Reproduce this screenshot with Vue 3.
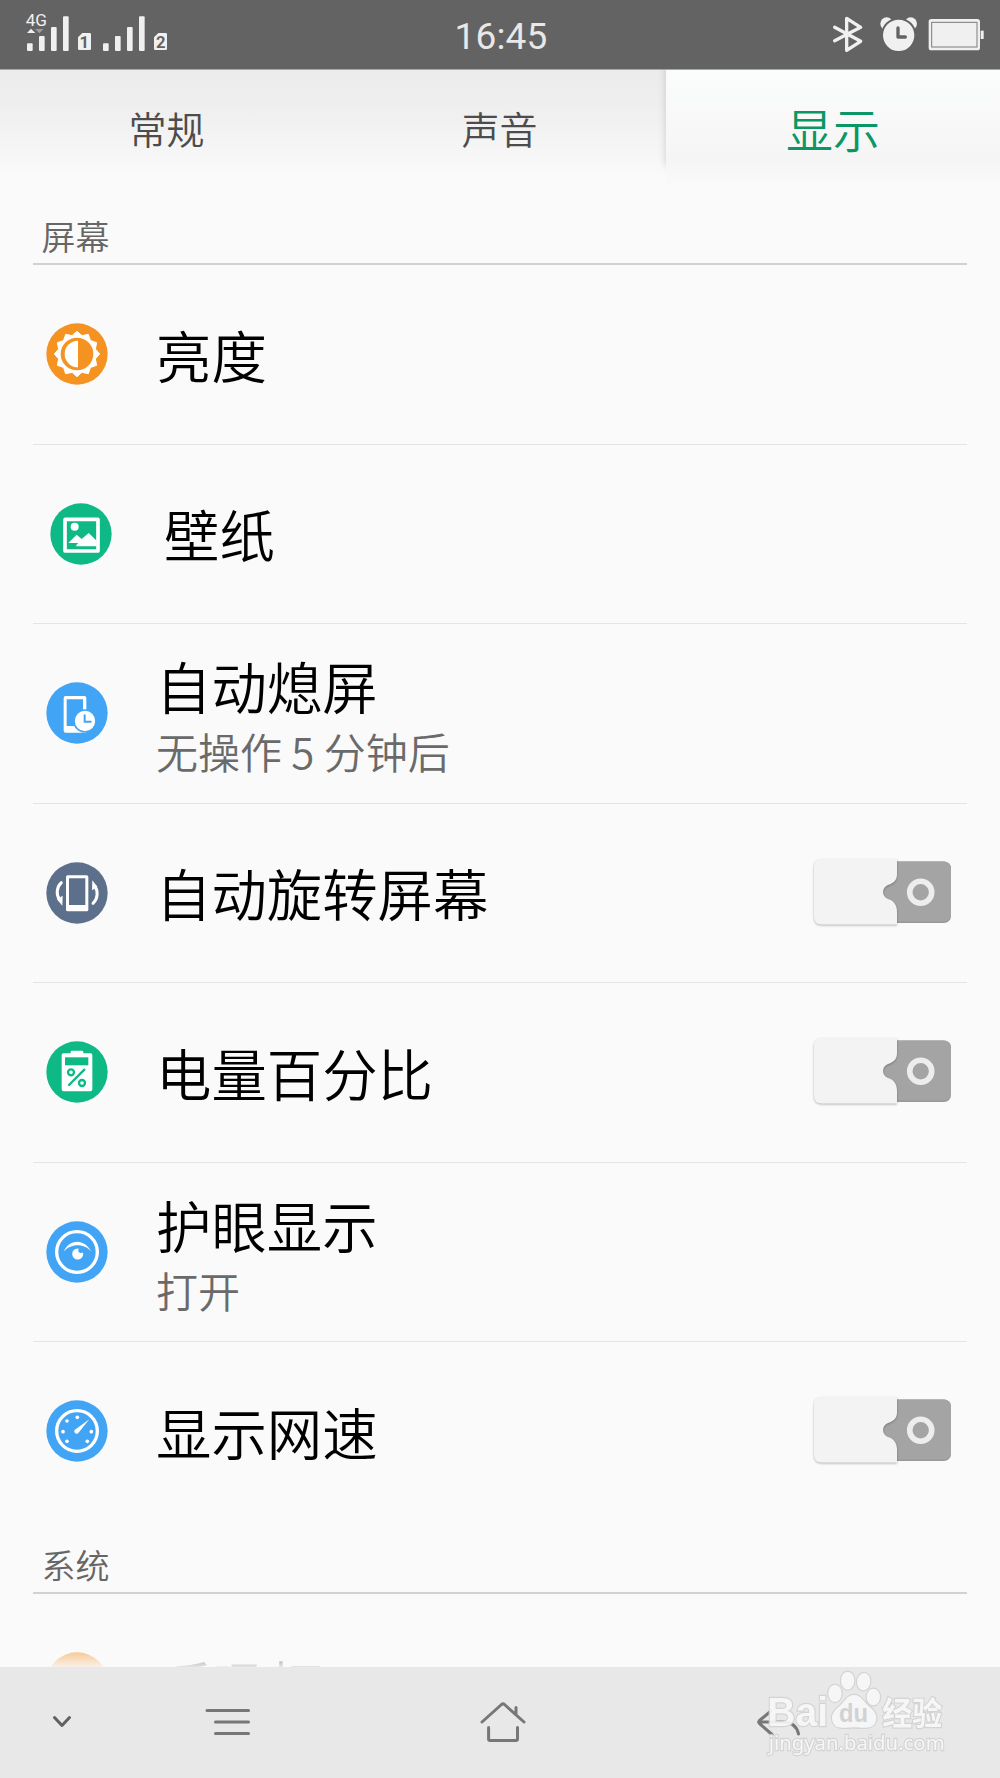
<template>
  <div class="screen">
    <header class="status-bar">
      <svg class="status-icons" viewBox="0 0 600 207">
        <g fill="#f0f0f0">
          <text x="77" y="78" class="network" textLength="64" lengthAdjust="spacingAndGlyphs">4G</text>
          <path d="M81 99 L93 86 L106 99Z" />
          <path d="M105 87 H131 L118 100Z" opacity="0.4" />
          <rect v-for="bar in signalBars" :key="bar.x" :x="bar.x" :y="bar.y" width="17" :height="153 - bar.y" rx="3" />
          <path d="M247 99 H269 Q273 99 273 103 V146 Q273 150 269 150 H238 Q234 150 234 146 V112Z" />
          <path d="M475 99 H497 Q501 99 501 103 V146 Q501 150 497 150 H466 Q462 150 462 146 V112Z" />
        </g>
        <text x="253" y="144" class="sim">1</text>
        <text x="482" y="144" class="sim">2</text>
      </svg>
      <span class="time">16:45</span>
      <svg class="status-icons" viewBox="0 0 600 207">
        <path d="M104 82 L182 124 L140 151 V55 L182 82 L104 122" fill="none" stroke="#f0f0f0" stroke-width="10" stroke-linecap="round" stroke-linejoin="round" />
        <g fill="#f0f0f0">
          <circle cx="260" cy="71" r="19" />
          <circle cx="332" cy="71" r="19" />
        </g>
        <circle cx="296" cy="106" r="50" fill="#f0f0f0" stroke="#636363" stroke-width="6" />
        <path d="M294 84 V111 H316" fill="none" stroke="#636363" stroke-width="10" stroke-linecap="round" stroke-linejoin="round" />
        <rect x="386" y="57" width="154" height="94" rx="8" fill="#f0f0f0" />
        <rect x="395" y="67" width="136" height="74" fill="#f0f0f0" stroke="#7c7c7c" stroke-width="3" />
        <rect x="542" y="92" width="9" height="25" fill="#f0f0f0" />
      </svg>
    </header>

    <nav class="tabs">
      <div v-for="tab in tabs" :key="tab" :class="['tab', { active: tab === activeTab }]" @click="activeTab = tab">
        {{ tab }}
      </div>
    </nav>

    <main class="content">
      <h2 class="section-title">屏幕</h2>
      <div v-for="item in items" :key="item.label" :class="['row', { inset: item.inset }]">
        <svg class="icon" viewBox="-93 -93 186 186">
          <circle r="92" :fill="item.color" />
          <g v-if="item.icon === 'brightness'">
            <polygon :points="sunPoints" fill="#fff" stroke="#fff" stroke-width="3" stroke-linejoin="round" />
            <circle r="49" :fill="item.color" />
            <path d="M3 -40 A40 40 0 0 0 3 40Z" fill="#fff" />
          </g>
          <g v-else-if="item.icon === 'wallpaper'" fill="#fff">
            <rect x="-48" y="-44" width="99" height="95" rx="1" fill="none" stroke="#fff" stroke-width="11" />
            <circle cx="-19" cy="-22" r="12" />
            <path d="M-38 27 L-13 2 L2 15 L23 -3 L47 20 V37 H-14 V33 L-8 27Z" />
          </g>
          <g v-else-if="item.icon === 'timeout'">
            <path fill="#fff" fill-rule="evenodd" d="M-34 -51 H22 Q28 -51 28 -45 V59 H-34 Q-40 59 -40 53 V-45 Q-40 -51 -34 -51Z M-31 -41 V39 H18 V-41Z" />
            <circle cx="24" cy="24" r="33" fill="#fff" :stroke="item.color" stroke-width="5" />
            <path d="M23 7 V26 H41" fill="none" :stroke="item.color" stroke-width="6" stroke-linecap="round" />
          </g>
          <g v-else-if="item.icon === 'rotate'" fill="#fff">
            <path fill-rule="evenodd" d="M-28 -53 H29 Q34 -53 34 -48 V50 Q34 55 29 55 H-28 Q-33 55 -33 50 V-48 Q-33 -53 -28 -53Z M-24 -44 V36 H25 V-44Z" />
            <path d="M-47 -31 C-62 -17 -63 6 -52 21" fill="none" stroke="#fff" stroke-width="9" stroke-linecap="round" />
            <path d="M-60 19 L-43 8 L-44 38Z" />
            <path d="M48 31 C63 17 64 -6 53 -21" fill="none" stroke="#fff" stroke-width="9" stroke-linecap="round" />
            <path d="M61 -19 L45 -8 L46 -38Z" />
          </g>
          <g v-else-if="item.icon === 'battery'">
            <path d="M-19 -60 Q-19 -64 -15 -64 H15 Q19 -64 19 -60 V-56 H41 Q46 -56 46 -51 V52 Q46 58 40 58 H-40 Q-46 58 -46 52 V-51 Q-46 -56 -41 -56 H-19Z" fill="#fff" />
            <rect x="-36" y="-44" width="70" height="24" :fill="item.color" />
            <g fill="none" :stroke="item.color" stroke-width="7">
              <circle cx="-18" cy="1" r="9" />
              <circle cx="15" cy="33" r="9" />
              <path d="M22 -7 L-24 39" stroke-linecap="round" />
            </g>
          </g>
          <g v-else-if="item.icon === 'eye'">
            <circle r="61" fill="none" stroke="#fff" stroke-width="10" />
            <path d="M-40 -1 C-24 -41 24 -41 43 -1 C24 -27 -20 -27 -40 -1Z" fill="#fff" />
            <circle cx="2" cy="6" r="16.5" fill="#fff" />
            <circle cx="12" cy="-5" r="8" :fill="item.color" />
          </g>
          <g v-else>
            <circle r="61" fill="none" stroke="#fff" stroke-width="10" />
            <circle v-for="dot in dialDots" :key="dot.join()" :cx="dot[0]" :cy="dot[1]" r="5.5" fill="#fff" />
            <path d="M37 -35 L4 6 C-1 12 -12 5 -7 -3Z" fill="#fff" />
          </g>
        </svg>
        <div :class="['text', { double: item.value }]">
          <div class="label">{{ item.label }}</div>
          <div v-if="item.value" class="value">{{ item.value }}</div>
        </div>
        <svg v-if="item.toggle" class="toggle" viewBox="0 0 146 76">
          <rect x="70" y="6.5" width="71" height="61.5" rx="7" fill="#999" />
          <rect x="70" y="6.5" width="71" height="60" rx="7" fill="#a4a4a4" />
          <path class="knob" d="M12 4 H87 V19 C87 25 84 27.500 79.500 29.500 C71 31.500 71 42.500 79.500 44.500 C84 46.500 87 50 87 57 V69.500 H12 Q4 69.500 4 61.500 V12 Q4 4 12 4Z" />
          <circle cx="110.700" cy="37.300" r="11" fill="none" stroke="#ededed" stroke-width="5.600" />
        </svg>
      </div>

      <h2 class="section-title system">系统</h2>
      <div class="row fading">
        <svg class="icon" viewBox="-93 -93 186 186">
          <circle r="92" fill="#f59322" />
        </svg>
        <div class="text">
          <div class="label">呼吸灯</div>
        </div>
      </div>
    </main>

    <footer class="nav-bar">
      <svg class="nav-icon chevron" viewBox="0 0 20 14">
        <path d="M2.500 2.500 L10 10.500 L17.500 2.500" />
      </svg>
      <svg class="nav-icon menu" viewBox="0 0 46 28">
        <path d="M2 2.500 H43.500 M10.500 14 H43.500 M10.500 25.500 H43.500" />
      </svg>
      <svg class="nav-icon home" viewBox="0 0 48 44">
        <path d="M3 22 L22.500 4.500 Q24 3.300 25.500 4.500 L45 22 M37 7.500 V14.500 M9.600 27.500 V39 Q9.600 40.500 11 40.500 H37 Q38.500 40.500 38.500 39 V27.500" />
      </svg>
      <svg class="nav-icon back" viewBox="0 0 46 30">
        <path d="M15 3 L3.500 12.500 Q2 14 3.500 15.500 L16 26.500 M3 14 H27 C36 14 41 19 42.500 26" />
      </svg>
      <svg class="watermark" viewBox="90 75 576 285">
        <g class="mark">
          <text x="112" y="258" class="bai" textLength="182" lengthAdjust="spacingAndGlyphs">Bai</text>
          <ellipse cx="315" cy="160" rx="20" ry="26" />
          <ellipse cx="353" cy="122" rx="20" ry="27" />
          <ellipse cx="401" cy="125" rx="20" ry="26" transform="rotate(8 401 125)" />
          <ellipse cx="430" cy="171" rx="20" ry="25" />
          <path d="M372 165 C392 165 401 184 415 197 C434 213 444 226 437 245 C429 267 407 264 372 262 C337 264 316 267 308 245 C301 226 311 213 330 197 C344 184 352 165 372 165Z" />
          <text x="457" y="254" class="jingyan" textLength="180" lengthAdjust="spacingAndGlyphs">经验</text>
          <text x="116" y="329" class="url" textLength="528" lengthAdjust="spacingAndGlyphs">jingyan.baidu.com</text>
        </g>
        <text x="327" y="247" class="du" textLength="87" lengthAdjust="spacingAndGlyphs">du</text>
      </svg>
    </footer>
  </div>
</template>

<script setup>
import { ref } from "vue";

const tabs = ["常规", "声音", "显示"];
const activeTab = ref("显示");

const items = [
  { label: "亮度", icon: "brightness", color: "#f59322" },
  { label: "壁纸", icon: "wallpaper", color: "#0fb985", inset: true },
  { label: "自动熄屏", value: "无操作 5 分钟后", icon: "timeout", color: "#42a4f4" },
  { label: "自动旋转屏幕", icon: "rotate", color: "#5c708c", toggle: true },
  { label: "电量百分比", icon: "battery", color: "#0fb985", toggle: true },
  { label: "护眼显示", value: "打开", icon: "eye", color: "#42a4f4" },
  { label: "显示网速", icon: "speed", color: "#42a4f4", toggle: true },
];

const signalBars = [
  { x: 81, y: 130 },
  { x: 117, y: 108 },
  { x: 153, y: 81 },
  { x: 189, y: 49 },
  { x: 309, y: 130 },
  { x: 345, y: 108 },
  { x: 381, y: 81 },
  { x: 417, y: 49 },
];

const dialDots = [[1, -41], [-30, -30], [-42, 2], [-30, 31], [31, 31], [43, 2]];

// 12 tips alternating with the valleys between them
const sunPoints = Array.from({ length: 24 }, (_, i) => {
  const radius = i % 2 ? 57 : 68;
  const angle = (i * Math.PI) / 12;
  return `${(radius * Math.sin(angle)).toFixed(1)},${(-radius * Math.cos(angle)).toFixed(1)}`;
}).join(" ");
</script>

<style>
body {
  background: #fafafa;
}
</style>

<style scoped>
.screen {
  display: flex;
  flex-direction: column;
  width: 1000px;
  height: 1778px;
  overflow: hidden;
  background: #fafafa;
  font-family: "Noto Sans CJK SC", sans-serif;
  font-weight: 350;
}

.status-bar {
  display: flex;
  justify-content: space-between;
  flex: none;
  height: 69px;
  border-bottom: 1px solid #a8a8a8;
  background: #636363;
}

.status-icons {
  width: 200px;
  height: 69px;
}

.network {
  font: 400 49px Roboto, sans-serif;
}

.sim {
  font: bold 50px Roboto, sans-serif;
  fill: #636363;
  text-anchor: middle;
}

.time {
  padding-left: 2px;
  color: #e8e8e8;
  font: 37px/74px Roboto, sans-serif;
  letter-spacing: 0.2px;
}

.tabs {
  display: grid;
  grid-template-columns: 333px 333px 334px;
  flex: none;
  height: 118px;
  background: linear-gradient(#ebebeb, #f1f1f1 45%, #fafafa 90%);
  overflow: hidden;
}

.tab {
  color: #4c4c4c;
  font-size: 38px;
  line-height: 116px;
  text-align: center;
}

.tab.active {
  background: linear-gradient(#fafdfc, #f8f9f8 35%, #f5f5f5 75%, #fafafa);
  box-shadow: 0 -22px 8px rgba(0, 0, 0, 0.16);
  color: #0a9765;
  font-size: 47px;
  line-height: 115px;
}

.content {
  flex: none;
  box-sizing: border-box;
  height: 1479px;
  padding: 15px 33px 0;
  overflow: hidden;
}

.section-title {
  box-sizing: border-box;
  height: 62px;
  margin: 0;
  padding-left: 8.5px;
  border-bottom: 2px solid #d2d2d2;
  color: #666;
  font-size: 34px;
  font-weight: 350;
  line-height: 66px;
}

.section-title.system {
  margin-top: 10px;
}

.row {
  display: flex;
  align-items: center;
  box-sizing: border-box;
  height: 179.5px;
  padding: 0 11px 0 13px;
  border-bottom: 1px solid #e4e4e4;
}

.row:nth-of-type(7) {
  border-bottom-color: transparent;
}

.icon {
  flex: none;
  width: 62px;
  height: 62px;
}

.inset .icon {
  margin-left: 3.5px;
}

.text {
  flex: 1;
  padding-left: 48px;
}

.inset .text {
  padding-left: 52.5px;
}

.text.double {
  padding-top: 10px;
}

.label {
  margin-top: -1px;
  color: #000;
  font-size: 55.4px;
  line-height: 66px;
  white-space: nowrap;
}

.value {
  color: #6a6a6a;
  font-size: 42px;
  line-height: 65px;
}

.toggle {
  flex: none;
  width: 146px;
  height: 76px;
}

.knob {
  fill: #f3f3f3;
  filter: drop-shadow(0 1.5px 1px rgba(0, 0, 0, 0.28));
}

.fading {
  border: 0;
  -webkit-mask-image: linear-gradient(rgba(0, 0, 0, 0.5) 57px, transparent 76px);
  mask-image: linear-gradient(rgba(0, 0, 0, 0.5) 57px, transparent 76px);
}

.fading .label {
  margin-top: 2px;
}

.nav-bar {
  position: relative;
  display: flex;
  align-items: center;
  flex: none;
  box-sizing: border-box;
  height: 111px;
  padding: 0 199px 0 52px;
  background: #e8e8e8;
}

.nav-icon {
  flex: none;
  fill: none;
  stroke: #777;
  stroke-width: 3;
  stroke-linecap: round;
  stroke-linejoin: round;
}

.chevron {
  width: 20px;
  height: 14px;
  margin-top: -1px;
  stroke: #606060;
}

.menu {
  width: 46px;
  height: 28px;
  margin-top: -2px;
  margin-left: 133px;
}

.home {
  width: 48px;
  height: 44px;
  margin-top: -1px;
  margin-left: 228px;
}

.back {
  width: 46px;
  height: 30px;
  margin-left: 229px;
}

.watermark {
  position: absolute;
  top: -2px;
  left: 760px;
  width: 192px;
  height: 95px;
}

.mark {
  fill: #f8f8f8;
  stroke: #d2d2d2;
  stroke-width: 7;
  paint-order: stroke;
  opacity: 0.92;
}

.bai {
  font: bold 122px "Liberation Sans", sans-serif;
}

.du {
  fill: #d2d2d2;
  font: bold 76px "Liberation Sans", sans-serif;
}

.jingyan {
  font: bold 94px "Noto Sans CJK SC", sans-serif;
}

.url {
  font: 62px "Noto Sans", sans-serif;
}
</style>
